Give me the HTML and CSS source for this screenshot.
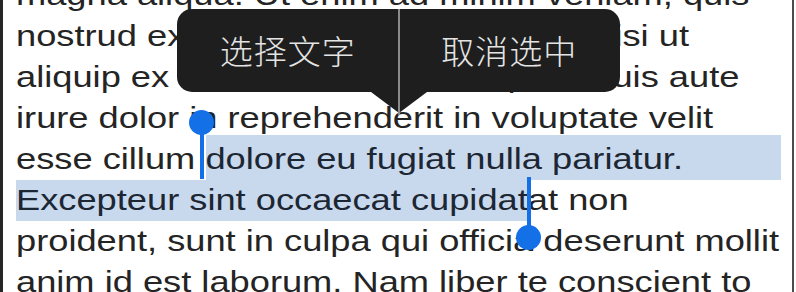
FILE: index.html
```html
<!DOCTYPE html>
<html lang="zh">
<head>
<meta charset="utf-8">
<title>Text selection</title>
<link rel="stylesheet" href="styles.css">
</head>
<body>
<div class="screen">
  <div class="text">
    <div class="line">magna aliqua. Ut enim ad minim veniam, quis</div>
    <div class="line">nostrud exercitation ullamco laboris nisi ut</div>
    <div class="line">aliquip ex ea commodo consequat. Duis aute</div>
    <div class="line">irure dolor in reprehenderit in voluptate velit</div>
    <div class="line"><span>esse cillum </span><span class="sel sel-top">dolore eu fugiat nulla pariatur.</span></div>
    <div class="line"><span class="sel">Excepteur sint occaecat cupidat</span><span>at non</span></div>
    <div class="line">proident, sunt in culpa qui officia deserunt mollit</div>
    <div class="line">anim id est laborum. Nam liber te conscient to</div>
  </div>

  <div class="callout">
    <div class="menu">
      <div class="item">选择文字</div>
      <div class="item">取消选中</div>
    </div>
    <div class="divider"></div>
    <div class="arrow"></div>
  </div>

  <div class="handle handle-start"><span class="knob"></span><span class="stem"></span></div>
  <div class="handle handle-end"><span class="stem"></span><span class="knob"></span></div>
</div>
</body>
</html>
```
FILE: styles.css
```css
html, body {
  margin: 0;
  padding: 0;
  background: #ffffff;
}

.screen {
  position: relative;
  width: 794px;
  height: 292px;
  box-sizing: border-box;
  border-left: 3px solid #262626;
  border-right: 2px solid #4d4d4d;
  overflow: hidden;
  background: #ffffff;
}

/* the reference is horizontally stretched: reproduce with scaleX */
.text {
  width: 612px;
  margin: -25px 0 0 13px;
  transform: scaleX(1.25);
  transform-origin: 0 0;
  font-family: "Liberation Sans", Arial, sans-serif;
  font-size: 29px;
  color: #242424;
}

.line {
  display: flex;
  height: 41px;
  line-height: 41px;
  white-space: pre;
}

.sel {
  background: #c8d9ed;
  color: #1d2633;
}

.sel-top {
  flex: 1;
  margin-top: -4px;
  padding-top: 4px;
}

.callout {
  position: absolute;
  left: 174px;
  top: 9px;
  width: 443px;
  height: 83px;
  border-radius: 15px;
  background: #1e1e1e;
}

.menu {
  display: flex;
  height: 100%;
}

.item {
  flex: 1;
  display: flex;
  align-items: center;
  justify-content: center;
  font-family: "Noto Sans CJK SC", "Noto Sans", sans-serif;
  font-size: 33px;
  font-weight: 300;
  letter-spacing: 1px;
  color: #e4e4e4;
  padding-bottom: 2px;
}

.divider {
  position: absolute;
  left: 221px;
  top: 0;
  width: 2px;
  height: 106px;
  background: #8a8a8a;
  z-index: 2;
}

.arrow {
  position: absolute;
  left: 194px;
  top: 83px;
  width: 0;
  height: 0;
  border-left: 28px solid transparent;
  border-right: 28px solid transparent;
  border-top: 21px solid #1e1e1e;
}

.handle {
  position: absolute;
  display: flex;
  flex-direction: column;
  align-items: center;
  width: 25px;
}

.knob {
  display: block;
  width: 25px;
  height: 25px;
  border-radius: 50%;
  background: #1370e6;
}

.stem {
  display: block;
  width: 4px;
  background: #1370e6;
}

.handle-start {
  left: 186px;
  top: 110px;
}

.handle-start .knob {
  margin-bottom: -12px;
}

.handle-start .stem {
  height: 56px;
}

.handle-end {
  left: 513px;
  top: 177px;
}

.handle-end .stem {
  height: 60px;
  margin-bottom: -12px;
}
```
